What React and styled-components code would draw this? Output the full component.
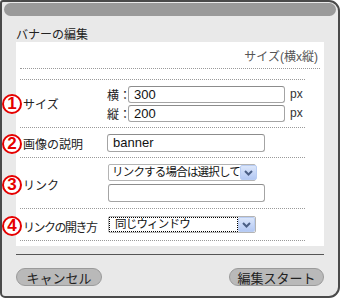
import React from 'react';
import styled, { createGlobalStyle } from 'styled-components';

const GlobalStyle = createGlobalStyle`
  html, body {
    margin: 0;
    padding: 0;
    background: #ffffff;
  }
  body {
    font-family: "Liberation Sans", "Noto Sans CJK JP", sans-serif;
    color: #222;
  }
`;

const Dialog = styled.div`
  box-sizing: border-box;
  width: 340px;
  height: 298px;
  border: 2px solid #4a4a4a;
  border-radius: 3px 11px 11px 5px;
  background: #e9e9e9;
  display: flex;
  flex-direction: column;
  overflow: hidden;
`;

const TitleBar = styled.div`
  height: 13px;
  margin: 1px 2px 0 2px;
  border-radius: 7px;
  background: #9a9a9a;
`;

const Heading = styled.div`
  height: 26px;
  padding-left: 14px;
  display: flex;
  align-items: flex-end;
  font-size: 12px;
  line-height: 14px;
  color: #222;
`;

const Panel = styled.div`
  box-sizing: border-box;
  height: 204px;
  margin: 0 14px;
  background: #fff;
  padding: 0 0 0 4px;
  display: flex;
  flex-direction: column;
`;

const PanelHead = styled.div`
  box-sizing: border-box;
  height: 27px;
  margin-right: 4px;
  padding-right: 2px;
  border-bottom: 1px dotted #9a9a9a;
  display: flex;
  align-items: center;
  justify-content: flex-end;
  font-size: 12px;
  color: #555;
`;

const Rows = styled.div`
  margin-top: 10px;
  margin-right: 19px;
  border-top: 1px dotted #9a9a9a;
`;

const Row = styled.div`
  box-sizing: border-box;
  height: ${p => p.h}px;
  border-bottom: 1px dotted #9a9a9a;
  display: flex;
  align-items: center;
`;

const Label = styled.div`
  width: 87px;
  flex: none;
  display: flex;
  align-items: center;
  font-size: 12px;
  letter-spacing: ${p => (p.tight ? -1.5 : 0)}px;
  color: #222;
  white-space: nowrap;
  margin-top: ${p => p.shift || 0}px;
`;

const Num = styled.span`
  box-sizing: border-box;
  width: 20px;
  height: 20px;
  margin-left: -18px;
  margin-right: 1px;
  border: 2px solid #e60000;
  border-radius: 50%;
  background: #fff;
  color: #e60000;
  font-family: "Liberation Sans", Arial, sans-serif;
  font-weight: bold;
  font-size: 17px;
  line-height: 16px;
  letter-spacing: 0;
  text-align: center;
  flex: none;
`;

const Fields = styled.div`
  display: flex;
  flex-direction: column;
  gap: ${p => p.gap || 0}px;
`;

const FieldLine = styled.div`
  display: flex;
  align-items: center;
  font-size: 12px;
`;

const AxisLabel = styled.span`
  width: 21px;
  font-size: 12px;
  color: #222;
`;

const Unit = styled.span`
  margin-left: 5px;
  font-size: 12px;
  color: #333;
`;

const Input = styled.div`
  box-sizing: border-box;
  width: ${p => p.w}px;
  height: ${p => p.h || 17}px;
  margin-left: ${p => p.indent || 0}px;
  border: 1px solid #a4a4a4;
  border-top-color: #8c8c8c;
  border-radius: 3px;
  background: #fff;
  padding-left: 5px;
  display: flex;
  align-items: center;
  font-size: 13px;
  color: #111;
`;

const Select = styled.div`
  box-sizing: border-box;
  width: ${p => p.w}px;
  height: 17px;
  margin-left: 1px;
  border: 1px solid #b4b4b4;
  border-radius: 2px;
  background: #fff;
  display: flex;
  align-items: stretch;
  font-size: 11.5px;
  line-height: 13px;
  color: #111;
`;

const SelectText = styled.div`
  flex: 1;
  display: flex;
  align-items: center;
  padding-left: ${p => (p.focused ? 5 : 3)}px;
  margin: ${p => (p.focused ? '1px' : '0')};
  outline: ${p => (p.focused ? '1px dotted #000' : 'none')};
  letter-spacing: -0.8px;
  white-space: nowrap;
`;

const Arrow = styled.div`
  width: 15px;
  flex: none;
  border: 1px solid #b9cdf3;
  border-radius: 2px;
  background: linear-gradient(#dbe6fb, #b4c9f4);
  display: flex;
  align-items: center;
  justify-content: center;
`;

const Footer = styled.div`
  margin: 8px 14px 0 14px;
  border-top: 1px solid #555;
  padding-top: 13px;
  display: flex;
  justify-content: space-between;
`;

const Button = styled.div`
  box-sizing: border-box;
  width: ${p => p.w}px;
  height: 18px;
  border: 1px solid #9a9a9a;
  border-radius: 9px;
  background: #b9b9b9;
  display: flex;
  align-items: center;
  justify-content: center;
  font-size: 13px;
  color: #222;
`;

const Chevron = () => (
  <svg width="9" height="6" viewBox="0 0 9 6">
    <path d="M1 1 L4.5 4.5 L8 1" fill="none" stroke="#4b5f86" strokeWidth="2" />
  </svg>
);

export default function App() {
  return (
    <>
      <GlobalStyle />
      <Dialog>
        <TitleBar />
        <Heading>バナーの編集</Heading>
        <Panel>
          <PanelHead>サイズ(横x縦)</PanelHead>
          <Rows>
            <Row h={48}>
              <Label>
                <Num>1</Num>サイズ
              </Label>
              <Fields gap={2}>
                <FieldLine>
                  <AxisLabel>横：</AxisLabel>
                  <Input w={157}>300</Input>
                  <Unit>px</Unit>
                </FieldLine>
                <FieldLine>
                  <AxisLabel>縦：</AxisLabel>
                  <Input w={157}>200</Input>
                  <Unit>px</Unit>
                </FieldLine>
              </Fields>
            </Row>
            <Row h={30}>
              <Label shift={2}>
                <Num>2</Num>画像の説明
              </Label>
              <Input w={158} h={18}>banner</Input>
            </Row>
            <Row h={51}>
              <Label shift={3}>
                <Num>3</Num>リンク
              </Label>
              <Fields gap={3}>
                <Select w={148}>
                  <SelectText>リンクする場合は選択して</SelectText>
                  <Arrow>
                    <Chevron />
                  </Arrow>
                </Select>
                <Input w={157} h={18} indent={1} />
              </Fields>
            </Row>
            <Row h={32}>
              <Label shift={3} tight>
                <Num>4</Num>リンクの開き方
              </Label>
              <Select w={148}>
                <SelectText focused>同じウィンドウ</SelectText>
                <Arrow>
                  <Chevron />
                </Arrow>
              </Select>
            </Row>
          </Rows>
        </Panel>
        <Footer>
          <Button w={86}>キャンセル</Button>
          <Button w={95}>編集スタート</Button>
        </Footer>
      </Dialog>
    </>
  );
}
